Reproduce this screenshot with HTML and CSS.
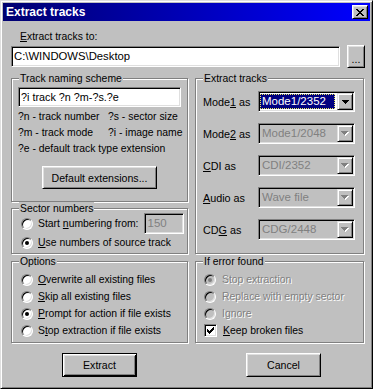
FILE: index.html
```html
<!DOCTYPE html>
<html lang="en">
<head>
  <meta charset="UTF-8">
  <title>Extract tracks</title>
  <link rel="stylesheet" href="styles.css">
</head>
<body>
  <div class="window">
    <div class="titlebar">
      <span class="title">Extract tracks</span>
      <button class="close" aria-label="Close">
        <svg width="8" height="7" viewBox="0 0 8 7" shape-rendering="crispEdges">
          <path d="M0 0h2v1H0zM6 0h2v1H6zM1 1h2v1H1zM5 1h2v1H5zM2 2h4v1H2zM3 3h2v1H3zM2 4h4v1H2zM1 5h2v1H1zM5 5h2v1H5zM0 6h2v1H0zM6 6h2v1H6z" fill="#000"/>
        </svg>
      </button>
    </div>

    <div class="content">
      <div class="path-label"><u>E</u>xtract tracks to:</div>
      <div class="path-row">
        <div class="field path-field">C:\WINDOWS\Desktop</div>
        <button class="btn browse">...</button>
      </div>

      <div class="columns">
        <fieldset class="group naming">
          <legend>Track naming scheme</legend>
          <div class="field naming-field">?i track ?n ?m-?s.?e</div>
          <div class="hints">
            <span>?n - track number</span><span>?s - sector size</span>
            <span>?m - track mode</span><span>?i - image name</span>
            <span class="wide">?e - default track type extension</span>
          </div>
          <button class="btn defaults">Default extensions...</button>
        </fieldset>

        <fieldset class="group extract">
          <legend>Extract tracks</legend>
          <div class="combo-row">
            <span class="combo-label">Mode<u>1</u> as</span>
            <div class="combo">
              <span class="combo-value selected">Mode1/2352</span>
              <span class="combo-btn"><svg width="7" height="4" viewBox="0 0 7 4" shape-rendering="crispEdges"><path d="M0 0h7v1H0zM1 1h5v1H1zM2 2h3v1H2zM3 3h1v1H3z" fill="#000"/></svg></span>
            </div>
          </div>
          <div class="combo-row">
            <span class="combo-label">Mode<u>2</u> as</span>
            <div class="combo disabled">
              <span class="combo-value">Mode1/2048</span>
              <span class="combo-btn"><svg width="8" height="5" viewBox="0 0 8 5" shape-rendering="crispEdges"><path d="M1 1h7v1H1zM2 2h5v1H2zM3 3h3v1H3zM4 4h1v1H4z" fill="#fff"/><path d="M0 0h7v1H0zM1 1h5v1H1zM2 2h3v1H2zM3 3h1v1H3z" fill="#808080"/></svg></span>
            </div>
          </div>
          <div class="combo-row">
            <span class="combo-label"><u>C</u>DI as</span>
            <div class="combo disabled">
              <span class="combo-value">CDI/2352</span>
              <span class="combo-btn"><svg width="8" height="5" viewBox="0 0 8 5" shape-rendering="crispEdges"><path d="M1 1h7v1H1zM2 2h5v1H2zM3 3h3v1H3zM4 4h1v1H4z" fill="#fff"/><path d="M0 0h7v1H0zM1 1h5v1H1zM2 2h3v1H2zM3 3h1v1H3z" fill="#808080"/></svg></span>
            </div>
          </div>
          <div class="combo-row">
            <span class="combo-label"><u>A</u>udio as</span>
            <div class="combo disabled">
              <span class="combo-value">Wave file</span>
              <span class="combo-btn"><svg width="8" height="5" viewBox="0 0 8 5" shape-rendering="crispEdges"><path d="M1 1h7v1H1zM2 2h5v1H2zM3 3h3v1H3zM4 4h1v1H4z" fill="#fff"/><path d="M0 0h7v1H0zM1 1h5v1H1zM2 2h3v1H2zM3 3h1v1H3z" fill="#808080"/></svg></span>
            </div>
          </div>
          <div class="combo-row">
            <span class="combo-label">CD<u>G</u> as</span>
            <div class="combo disabled">
              <span class="combo-value">CDG/2448</span>
              <span class="combo-btn"><svg width="8" height="5" viewBox="0 0 8 5" shape-rendering="crispEdges"><path d="M1 1h7v1H1zM2 2h5v1H2zM3 3h3v1H3zM4 4h1v1H4z" fill="#fff"/><path d="M0 0h7v1H0zM1 1h5v1H1zM2 2h3v1H2zM3 3h1v1H3z" fill="#808080"/></svg></span>
            </div>
          </div>
        </fieldset>

        <fieldset class="group sector">
          <legend>Sector numbers</legend>
          <div class="opt opt-start">
            <span class="radio"></span>
            <span>Start <u>n</u>umbering from:</span>
            <div class="field start-field">150</div>
          </div>
          <div class="opt">
            <span class="radio checked"></span>
            <span><u>U</u>se numbers of source track</span>
          </div>
        </fieldset>

        <fieldset class="group options">
          <legend>Options</legend>
          <div class="opts">
            <div class="opt"><span class="radio"></span><span><u>O</u>verwrite all existing files</span></div>
            <div class="opt"><span class="radio"></span><span><u>S</u>kip all existing files</span></div>
            <div class="opt"><span class="radio checked"></span><span><u>P</u>rompt for action if file exists</span></div>
            <div class="opt"><span class="radio"></span><span>S<u>t</u>op extraction if file exists</span></div>
          </div>
        </fieldset>

        <fieldset class="group errors">
          <legend>If error found</legend>
          <div class="opts">
            <div class="opt off"><span class="radio checked"></span><span>Stop extraction</span></div>
            <div class="opt off"><span class="radio"></span><span>Replace with empty sector</span></div>
            <div class="opt off"><span class="radio"></span><span>Ignore</span></div>
            <div class="opt">
              <span class="check">
                <svg width="7" height="7" viewBox="0 0 7 7" shape-rendering="crispEdges"><path d="M6 0h1v1H6zM5 1h2v1H5zM0 2h1v1H0zM4 2h3v1H4zM0 3h2v1H0zM3 3h3v1H3zM0 4h5v1H0zM1 5h3v1H1zM2 6h1v1H2z" fill="#000"/></svg>
              </span>
              <span><u>K</u>eep broken files</span>
            </div>
          </div>
        </fieldset>
      </div>

      <div class="actions">
        <button class="btn default">Extract</button>
        <button class="btn cancel">Cancel</button>
      </div>
    </div>
  </div>
</body>
</html>
```

FILE: styles.css
```css
body {
  margin: 0;
  background-color: #c0c0c0;
  font-family: "Liberation Sans", Arial, sans-serif;
  font-size: 10.4px;
  color: #000;
}

u {
  text-decoration: underline;
  text-underline-offset: 1px;
}

.window {
  width: 373px;
  height: 389px;
  box-sizing: border-box;
  background-color: #c0c0c0;
  border: 1px solid;
  border-color: #dfdfdf #000 #000 #dfdfdf;
  box-shadow: inset 1px 1px #fff, inset -1px -1px #808080;
  padding: 2px;
}

.titlebar {
  height: 18px;
  display: flex;
  align-items: center;
  justify-content: space-between;
  padding: 0 2px 0 3px;
  background: linear-gradient(to right, #000070, #0000ff);
  color: #fff;
  font-size: 12px;
  font-weight: bold;
}

.close {
  width: 16px;
  height: 14px;
  padding: 0;
  display: flex;
  align-items: center;
  justify-content: center;
  background-color: #c0c0c0;
  border: 1px solid;
  border-color: #fff #000 #000 #fff;
  box-shadow: inset 1px 1px #dfdfdf, inset -1px -1px #808080;
}

.content {
  padding: 9px 0 0 8px;
}

.path-label {
  margin-left: 9px;
  line-height: 13px;
}

/* sunken edit box */
.field {
  box-sizing: border-box;
  background-color: #fff;
  border: 1px solid;
  border-color: #808080 #fff #fff #808080;
  box-shadow: inset 1px 1px #000, inset -1px -1px #dfdfdf;
  padding: 0 2px;
  white-space: nowrap;
}

.path-row {
  display: flex;
  align-items: center;
  margin-top: 2px;
}

.path-field {
  width: 329px;
  height: 21px;
  line-height: 19px;
  font-size: 11.3px;
}

.btn {
  box-sizing: border-box;
  background-color: #c0c0c0;
  border: 1px solid;
  border-color: #fff #000 #000 #fff;
  box-shadow: inset 1px 1px #dfdfdf, inset -1px -1px #808080;
  font-family: inherit;
  font-size: 10.6px;
  color: #000;
  padding: 0;
}

.browse {
  width: 18px;
  height: 23px;
  margin-left: 7px;
  padding-top: 4px;
}

.columns {
  display: grid;
  grid-template-columns: 177px 169px;
  grid-template-rows: 130px 53px 88px;
  column-gap: 7px;
  margin-top: 4px;
}

.group {
  margin: 0;
  padding: 0;
  min-width: 0;
  box-sizing: border-box;
  border: 1px solid #808080;
  box-shadow: inset 1px 1px #fff, 1px 1px #fff;
}

.group legend {
  margin-left: 7px;
  padding: 0 1px;
  line-height: 13px;
  background-color: #c0c0c0;
}

.naming {
  grid-column: 1;
  grid-row: 1;
  height: 130px;
}

.naming-field {
  width: 163px;
  height: 20px;
  line-height: 18px;
  margin: 2px 0 0 6px;
  font-size: 10.8px;
}

.hints {
  display: grid;
  grid-template-columns: 90px auto;
  margin: 2px 0 0 6px;
  line-height: 16px;
  white-space: nowrap;
}

.hints .wide {
  grid-column: 1 / 3;
}

.defaults {
  display: block;
  width: 115px;
  height: 23px;
  margin: 9px auto 0;
}

.extract {
  grid-column: 2;
  grid-row: 1 / 3;
  height: 182px;
}

.combo-row {
  display: flex;
  align-items: center;
  margin: 6px 0 11px 7px;
}

.combo-label {
  width: 55px;
  font-size: 10.8px;
}

.combo {
  width: 97px;
  height: 21px;
  box-sizing: border-box;
  display: flex;
  padding: 1px;
  background-color: #fff;
  border: 1px solid;
  border-color: #808080 #fff #fff #808080;
  box-shadow: inset 1px 1px #000, inset -1px -1px #dfdfdf;
  font-size: 11.5px;
}

.combo-value {
  flex: 1;
  line-height: 17px;
  padding-left: 2px;
  overflow: hidden;
  white-space: nowrap;
}

.combo-value.selected {
  margin: 1px 2px 1px 0;
  line-height: 13px;
  padding-left: 1px;
  background-color: #000080;
  color: #fff;
  border: 1px dotted #e8e860;
}

.combo-btn {
  width: 16px;
  height: 17px;
  flex: none;
  box-sizing: border-box;
  display: flex;
  align-items: center;
  justify-content: center;
  background-color: #c0c0c0;
  border: 1px solid;
  border-color: #dfdfdf #000 #000 #dfdfdf;
  box-shadow: inset 1px 1px #fff, inset -1px -1px #808080;
}

.combo.disabled {
  background-color: #c0c0c0;
  color: #808080;
}

.sector {
  grid-column: 1;
  grid-row: 2;
  height: 52px;
}

.opt {
  display: flex;
  align-items: center;
  height: 17px;
  padding-left: 9px;
  gap: 5px;
  white-space: nowrap;
}

.opt-start {
  height: 21px;
  margin-top: -2px;
}

.start-field {
  width: 45px;
  height: 21px;
  line-height: 19px;
  margin: 0 3px 0 auto;
  padding-left: 3px;
  background-color: #c0c0c0;
  color: #808080;
  font-size: 11.5px;
}

.options {
  grid-column: 1;
  grid-row: 3;
  height: 88px;
}

.errors {
  grid-column: 2;
  grid-row: 3;
  height: 88px;
}

.opts {
  margin-top: 3px;
}

.errors .opt {
  padding-left: 8px;
  gap: 6px;
}

.radio {
  position: relative;
  flex: none;
  width: 12px;
  height: 12px;
  box-sizing: border-box;
  border-radius: 50%;
  border: 1px solid;
  border-color: #808080 #fff #fff #808080;
  box-shadow: inset 1px 1px #000, inset -1px -1px #dfdfdf;
  background-color: #fff;
}

.radio.checked::after {
  content: "";
  position: absolute;
  left: 3px;
  top: 3px;
  width: 4px;
  height: 4px;
  border-radius: 50%;
  background-color: #000;
}

.opt.off {
  color: #808080;
  text-shadow: 1px 1px 0 #fff;
}

.opt.off .radio {
  background-color: #c0c0c0;
}

.opt.off .radio.checked::after {
  background-color: #808080;
}

.check {
  flex: none;
  width: 13px;
  height: 13px;
  box-sizing: border-box;
  display: flex;
  align-items: center;
  justify-content: center;
  background-color: #fff;
  border: 1px solid;
  border-color: #808080 #fff #fff #808080;
  box-shadow: inset 1px 1px #000, inset -1px -1px #dfdfdf;
}

.actions {
  display: grid;
  grid-template-columns: 177px 169px;
  column-gap: 7px;
  margin-top: 10px;
}

.actions .btn {
  width: 75px;
  height: 24px;
}

.default {
  justify-self: center;
  border-color: #000;
  box-shadow: inset 1px 1px #fff, inset -1px -1px #000, inset 2px 2px #dfdfdf, inset -2px -2px #808080;
}

.cancel {
  margin-left: 51px;
}
```
